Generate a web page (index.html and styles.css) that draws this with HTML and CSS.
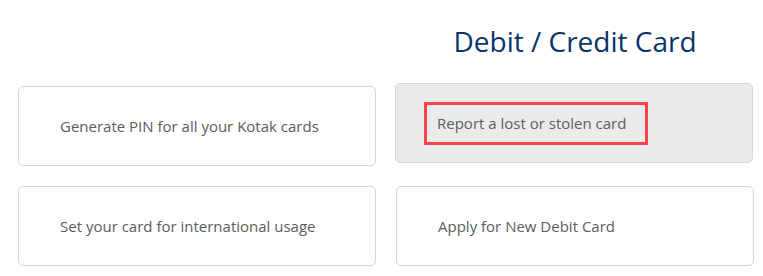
FILE: index.html
```html
<!DOCTYPE html>
<html lang="en">
<head>
<meta charset="utf-8">
<title>Debit / Credit Card</title>
<link rel="stylesheet" href="styles.css">
</head>
<body>
<div class="section">
  <div class="heading-row">
    <div></div>
    <h2 class="title">Debit / Credit Card</h2>
  </div>
  <div class="cards">
    <a class="card">Generate PIN for all your Kotak cards</a>
    <a class="card card-active">Report a lost or stolen card<span class="highlight"></span></a>
    <a class="card">Set your card for international usage</a>
    <a class="card">Apply for New Debit Card</a>
  </div>
</div>
</body>
</html>
```

FILE: styles.css
```css
html, body {
  margin: 0;
  padding: 0;
  background: #ffffff;
}

body {
  font-family: "Open Sans", "Liberation Sans", sans-serif;
}

.section {
  padding: 23px 9px 0 18px;
}

.heading-row {
  display: grid;
  grid-template-columns: 358px 358px;
  column-gap: 20px;
}

.title {
  margin: 0;
  font-size: 28px;
  line-height: 36px;
  font-weight: 400;
  color: #0b3466;
  text-align: center;
}

.cards {
  margin-top: 27px;
  display: grid;
  grid-template-columns: 358px 358px;
  column-gap: 20px;
  row-gap: 20px;
}

.card {
  position: relative;
  box-sizing: border-box;
  height: 80px;
  display: flex;
  align-items: center;
  padding-left: 41px;
  border: 1px solid #c9d9e5;
  border-radius: 5px;
  background: #ffffff;
  color: #5c5c5c;
  font-size: 15px;
  text-decoration: none;
}

.card-active {
  background: #ebebeb;
  transform: translate(-1px, -3px);
}

.highlight {
  position: absolute;
  left: 28px;
  top: 18px;
  width: 224px;
  height: 43px;
  box-sizing: border-box;
  border: 3px solid #f2444a;
}
```
